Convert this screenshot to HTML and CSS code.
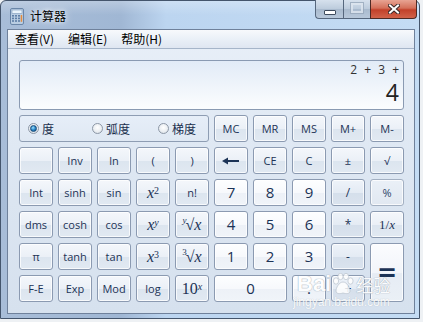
FILE: index.html
```html
<!DOCTYPE html>
<html>
<head>
<meta charset="utf-8">
<title>计算器</title>
<link rel="stylesheet" href="styles.css">
</head>
<body>
<div class="window">
  <div class="titlebar">
    <svg class="app-icon" width="14" height="17" viewBox="0 0 14 17">
      <rect x="0.5" y="0.5" width="13" height="16" rx="1.5" fill="#b9cde2" stroke="#6a86a8"/>
      <rect x="2" y="2" width="10" height="3.5" fill="#eaf4fb" stroke="#7d98b8" stroke-width="0.6"/>
      <g fill="#5f7fa6">
        <rect x="2" y="7" width="2" height="1.6"/><rect x="5" y="7" width="2" height="1.6"/><rect x="8" y="7" width="2" height="1.6"/>
        <rect x="2" y="9.6" width="2" height="1.6"/><rect x="5" y="9.6" width="2" height="1.6"/><rect x="8" y="9.6" width="2" height="1.6"/>
        <rect x="2" y="12.2" width="2" height="1.6"/><rect x="5" y="12.2" width="2" height="1.6"/><rect x="8" y="12.2" width="2" height="1.6"/>
      </g>
      <rect x="10.7" y="7" width="1.5" height="6.8" fill="#e48b3c"/>
    </svg>
    <span class="title">计算器</span>
    <div class="caption">
      <div class="cap-btn cap-min"><span class="min-glyph"></span></div>
      <div class="cap-btn cap-max"><span class="max-glyph"></span></div>
      <div class="cap-btn cap-close">
        <svg width="12" height="10" viewBox="0 0 12 10">
          <path d="M2 1.5 L10 8.5 M10 1.5 L2 8.5" stroke="#3b2a2a" stroke-width="4" stroke-linecap="square"/>
          <path d="M2 1.5 L10 8.5 M10 1.5 L2 8.5" stroke="#ffffff" stroke-width="2" stroke-linecap="square"/>
        </svg>
      </div>
    </div>
  </div>

  <div class="client">
    <div class="menubar">
      <span class="menu-item">查看(V)</span>
      <span class="menu-item">编辑(E)</span>
      <span class="menu-item">帮助(H)</span>
    </div>
    <div class="content">
      <div class="display">
        <div class="expr">2 + 3 +</div>
        <div class="result">4</div>
      </div>
      <div class="keys">
        <div class="angle">
          <label class="radio r1"><span class="dot on"></span>度</label>
          <label class="radio r2"><span class="dot"></span>弧度</label>
          <label class="radio r3"><span class="dot"></span>梯度</label>
        </div>
        <div class="key">MC</div>
        <div class="key">MR</div>
        <div class="key">MS</div>
        <div class="key">M+</div>
        <div class="key">M-</div>

        <div class="key"></div>
        <div class="key">Inv</div>
        <div class="key">ln</div>
        <div class="key">(</div>
        <div class="key">)</div>
        <div class="key"><svg width="18" height="8" viewBox="0 0 18 8"><path d="M5 4 H17" stroke="#1c3356" stroke-width="2"/><path d="M0 4 L6 0.5 V7.5 Z" fill="#1c3356"/></svg></div>
        <div class="key">CE</div>
        <div class="key">C</div>
        <div class="key">±</div>
        <div class="key">√</div>

        <div class="key">Int</div>
        <div class="key">sinh</div>
        <div class="key">sin</div>
        <div class="key math"><i>x</i><sup>2</sup></div>
        <div class="key">n!</div>
        <div class="key digit">7</div>
        <div class="key digit">8</div>
        <div class="key digit">9</div>
        <div class="key op">/</div>
        <div class="key pale">%</div>

        <div class="key">dms</div>
        <div class="key">cosh</div>
        <div class="key">cos</div>
        <div class="key math"><i>x</i><sup><i>y</i></sup></div>
        <div class="key math"><sup class="pre"><i>y</i></sup>√<i>x</i></div>
        <div class="key digit">4</div>
        <div class="key digit">5</div>
        <div class="key digit">6</div>
        <div class="key op">*</div>
        <div class="key math small">1/<i>x</i></div>

        <div class="key">π</div>
        <div class="key">tanh</div>
        <div class="key">tan</div>
        <div class="key math"><i>x</i><sup>3</sup></div>
        <div class="key math"><sup class="pre">3</sup>√<i>x</i></div>
        <div class="key digit">1</div>
        <div class="key digit">2</div>
        <div class="key digit">3</div>
        <div class="key op">-</div>
        <div class="key equals">=</div>

        <div class="key">F-E</div>
        <div class="key">Exp</div>
        <div class="key">Mod</div>
        <div class="key">log</div>
        <div class="key math">10<sup><i>x</i></sup></div>
        <div class="key digit zero">0</div>
        <div class="key digit">.</div>
        <div class="key op">+</div>
      </div>
    </div>
  </div>

  <div class="watermark">
    <div class="wm-top">
      <span class="wm-bai">Bai</span>
      <svg class="wm-paw" width="22" height="22" viewBox="0 0 22 22">
        <g fill="#ffffff" stroke="#b9c2cc" stroke-width="0.8">
          <ellipse cx="4" cy="8" rx="2.6" ry="3.2"/>
          <ellipse cx="8.5" cy="3.5" rx="2.6" ry="3.2"/>
          <ellipse cx="14" cy="3.5" rx="2.6" ry="3.2"/>
          <ellipse cx="18.5" cy="8" rx="2.6" ry="3.2"/>
          <path d="M11 9 C7 9 4 15 4 18 C4 21 8 21 11 20 C14 21 18 21 18 18 C18 15 15 9 11 9 Z"/>
        </g>
      </svg>
      <span class="wm-cn">经验</span>
    </div>
    <div class="wm-url">jingyan.baidu.com</div>
  </div>
</div>
</body>
</html>
```
FILE: styles.css
```css
html, body {
  margin: 0;
  padding: 0;
}
body {
  width: 423px;
  height: 322px;
  overflow: hidden;
  background: #eef1f4;
  font-family: "Noto Sans CJK SC", "Open Sans", sans-serif;
}
.window {
  position: relative;
  box-sizing: border-box;
  width: 420px;
  height: 319px;
  border: 1px solid #44556c;
  border-radius: 6px 6px 0 0;
  padding: 0 4px 4px 6px;
  display: flex;
  flex-direction: column;
  background:
    linear-gradient(180deg, rgba(255,255,255,0.25) 0px, rgba(255,255,255,0) 14px),
    linear-gradient(90deg, #a8bdd8 0px, #a0b7d4 120px, #bcd5f0 165px, #c4dcf4 100%);
}
.titlebar {
  height: 28px;
  display: flex;
  align-items: center;
  flex-shrink: 0;
}
.app-icon {
  margin-left: 3px;
  margin-top: 2px;
}
.title {
  margin-left: 6px;
  font-size: 12px;
  color: #000;
  margin-top: 1px;
  text-shadow: 0 0 8px rgba(255,255,255,0.9), 0 0 4px rgba(255,255,255,0.8);
}
.caption {
  margin-left: auto;
  align-self: flex-start;
  margin-top: -1px;
  margin-right: -2px;
  display: flex;
  height: 19px;
}
.cap-btn {
  box-sizing: border-box;
  height: 19px;
  display: flex;
  align-items: center;
  justify-content: center;
  border: 1px solid #56677d;
  border-top: none;
}
.cap-min {
  width: 28px;
  border-radius: 0 0 0 4px;
  border-right: none;
  background: linear-gradient(#d6e1ed, #bccbdc 50%, #a9bace 51%, #b8c8da);
}
.cap-max {
  width: 27px;
  border-right: none;
  background: linear-gradient(#d6e1ed, #bccbdc 50%, #a9bace 51%, #b8c8da);
}
.cap-close {
  width: 47px;
  border-radius: 0 0 4px 0;
  background: linear-gradient(#e8a493, #d4705a 45%, #c2412a 55%, #d1634a);
  border-color: #4e2a24;
}
.min-glyph {
  width: 10px;
  height: 3px;
  margin-top: 6px;
  background: #fff;
  border: 1px solid #3f4c5e;
  border-radius: 1px;
}
.max-glyph {
  width: 8px;
  height: 6px;
  border: 2px solid #dfe7f0;
  outline: 1px solid #98a8bb;
  margin-top: -2px;
  opacity: 0.8;
}
.client {
  flex: 1;
  box-sizing: border-box;
  border: 1px solid #6f819b;
  background: linear-gradient(#e8eff8, #dbe5f1 60%, #d6e1ee);
  display: flex;
  flex-direction: column;
}
.menubar {
  height: 18px;
  border-bottom: 1px solid #a6b5c9;
  background: linear-gradient(#f7f9fc, #eaf0f7 50%, #dfe6f1);
  display: flex;
  align-items: center;
  padding-left: 7px;
  gap: 14px;
  font-size: 12px;
  color: #000;
}
.menu-item {
  line-height: 18px;
}
.content {
  padding: 11px 0 0 11px;
  display: flex;
  flex-direction: column;
  gap: 5px;
}
.display {
  box-sizing: border-box;
  width: 385px;
  height: 50px;
  border: 1px solid #8a9ab2;
  border-radius: 3px;
  background: linear-gradient(#e2ebf7 0%, #edf3fa 45%, #fcfdfe 100%);
  padding: 1px 4px 0 0;
  text-align: right;
  font-family: "Open Sans", sans-serif;
  color: #222;
}
.expr {
  font-size: 12px;
  line-height: 16px;
  word-spacing: 4px;
  color: #333;
}
.result {
  font-size: 23px;
  line-height: 28px;
  color: #222;
}
.keys {
  display: grid;
  grid-template-columns: repeat(10, 34px);
  grid-template-rows: repeat(6, 27px);
  column-gap: 5px;
  row-gap: 5px;
}
.angle {
  grid-column: span 5;
  box-sizing: border-box;
  border: 1px solid #8e9db3;
  border-radius: 3px;
  background: linear-gradient(#e6eef8, #dfe8f3);
  display: flex;
  align-items: center;
  padding-left: 8px;
  font-size: 12px;
  color: #1a2f4d;
}
.radio {
  display: flex;
  align-items: center;
  gap: 3px;
}
.r1 { width: 64px; }
.r2 { width: 66px; }
.dot {
  box-sizing: border-box;
  width: 11px;
  height: 11px;
  border-radius: 50%;
  border: 1px solid #8c97a6;
  background: radial-gradient(circle at 50% 40%, #ffffff 0%, #e9edf1 60%, #cfd5dc 100%);
  display: flex;
  align-items: center;
  justify-content: center;
}
.dot.on::after {
  content: "";
  width: 5px;
  height: 5px;
  border-radius: 50%;
  background: radial-gradient(circle at 40% 35%, #9fe2ff 0%, #2a86c8 50%, #0d4f86 100%);
  border: 1px solid #174a78;
}
.key {
  box-sizing: border-box;
  border: 1px solid #8b9ab1;
  border-radius: 3px;
  background: linear-gradient(#f4f7fb 0%, #ebf0f7 50%, #dce5ef 52%, #e1e9f2 100%);
  box-shadow: inset 0 0 0 1px rgba(255,255,255,0.75);
  display: flex;
  align-items: center;
  justify-content: center;
  font-family: "Open Sans", sans-serif;
  font-size: 11px;
  color: #1c3356;
  line-height: 1;
}
.key.digit {
  font-size: 15px;
  background: linear-gradient(#fdfeff 0%, #f7f9fc 50%, #edf1f7 52%, #f0f4f9 100%);
}
.key.op {
  font-size: 12px;
  background: linear-gradient(#eef3f9 0%, #e4ebf4 50%, #d5dfeb 52%, #dae3ee 100%);
}
.key.pale {
  border-color: #a3b0c2;
  background: linear-gradient(#eaf0f7, #e1e8f1);
  color: #2a4466;
}
.key.math {
  font-family: "Liberation Serif", serif;
  font-size: 16px;
  color: #1c3356;
}
.key.math.small {
  font-size: 13px;
}
.key.math sup {
  font-size: 10px;
  position: relative;
  top: -2px;
  vertical-align: top;
  line-height: 1;
}
.key.math sup.pre {
  margin-right: -1px;
  font-size: 9px;
  top: -4px;
}
.key.equals {
  grid-row: span 2;
  font-size: 24px;
  font-weight: bold;
  font-family: "DejaVu Sans", sans-serif;
  background: linear-gradient(#fbfcfe 0%, #f2f5fa 50%, #e6ecf4 52%, #eaf0f6 100%);
}
.key.zero {
  grid-column: span 2;
}
.watermark {
  position: absolute;
  left: 296px;
  top: 270px;
  color: #ffffff;
  opacity: 0.85;
  pointer-events: none;
}
.wm-top {
  display: flex;
  align-items: center;
  height: 26px;
}
.wm-bai {
  font-family: "Liberation Sans", sans-serif;
  font-size: 22px;
  font-weight: bold;
  text-shadow: 0 0 1px #9aa5b2, 0 0 1px #9aa5b2;
}
.wm-paw {
  margin: 0 2px 0 1px;
}
.wm-cn {
  font-family: "Noto Sans CJK SC", sans-serif;
  font-size: 17px;
  text-shadow: 0 0 1px #9aa5b2, 0 0 1px #9aa5b2;
}
.wm-url {
  font-family: "Liberation Sans", sans-serif;
  font-size: 12px;
  margin-left: -4px;
  margin-top: -2px;
  text-shadow: 0 0 1px #a5afbb;
}
```
